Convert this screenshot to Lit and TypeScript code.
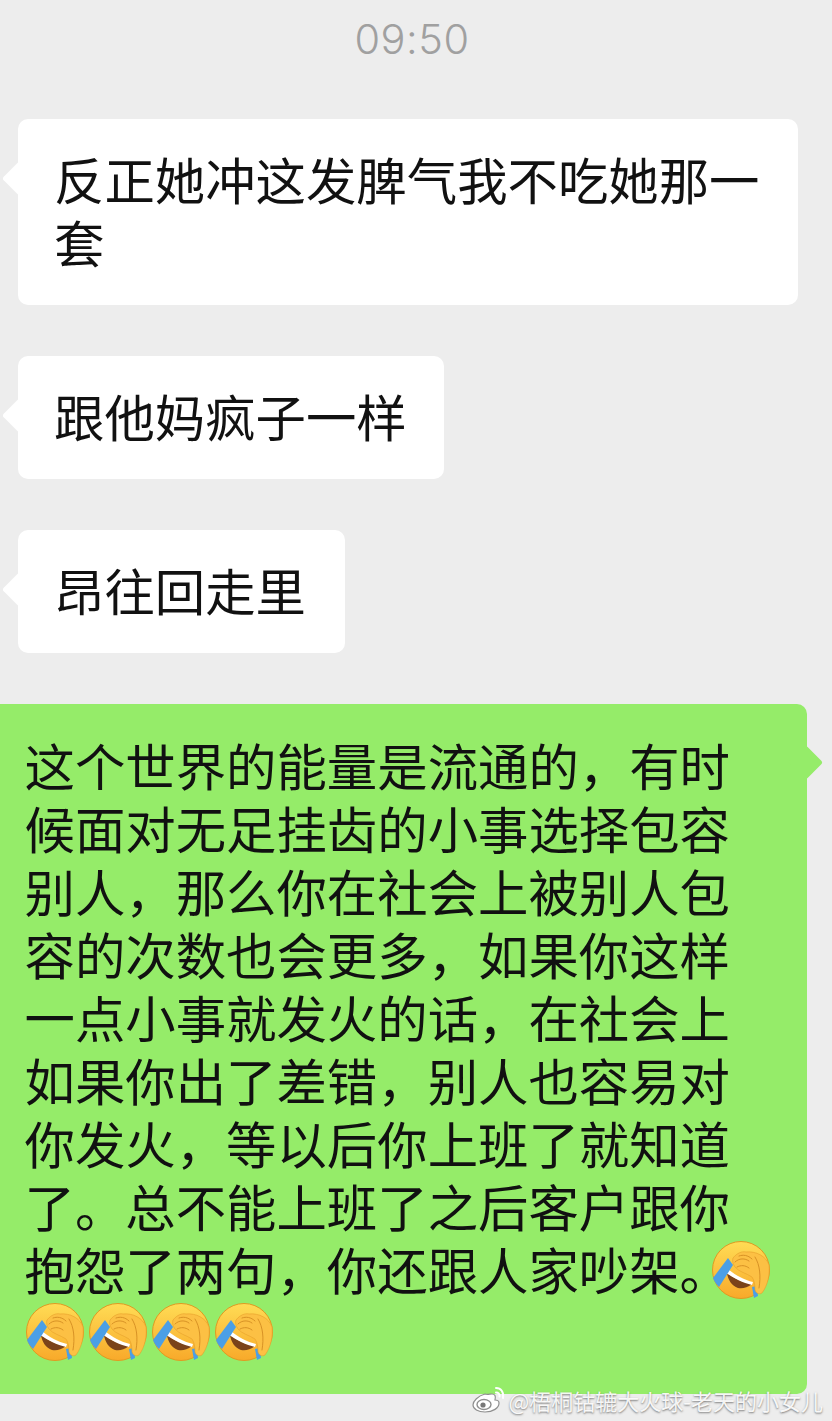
import { LitElement, html, css } from "lit";
import { customElement } from "lit/decorators.js";

const emoji = html`<svg class="emoji" viewBox="0 0 60 60" aria-hidden="true">
  <defs>
    <linearGradient id="fc" x1="0" y1="0" x2="0" y2="1">
      <stop offset="0" stop-color="#ffdc55"/><stop offset="1" stop-color="#f8a92a"/>
    </linearGradient>
  </defs>
  <circle cx="30" cy="30" r="28.5" fill="url(#fc)" stroke="#e09a22" stroke-width="1"/>
  <path d="M16 33C22 38 32 42 41 44 36 48 31 49 27 48 21 46 17 40 16 33z" fill="#7a431a"/>
  <path d="M17 29C24 35 33 40 42 42L41 45C32 43 23 38 15 33z" fill="#fff"/>
  <path d="M2 38L17 18 22 25 8 47C5 44 3 41 2 38z" fill="#4b9fe6"/>
  <path d="M41 47L46 46 47 56 43 58z" fill="#4b9fe6"/>
  <path d="M22 18C26 13 31 11 35 12 45 11 55 16 58 25 59 34 57 45 51 53 48 55 45 53 44 50 44 44 43 40 41 37 35 33 28 32 24 27 22 24 21 21 22 18z" fill="#fcc044" stroke="#e6a02a" stroke-width=".6"/>
  <path d="M24 22C28 18 34 18 38 21M28 16C32 14.500 37 15 41 19M26 27C30 25 34 25 38 28M44 17C49 25 50 36 48 48" fill="none" stroke="#d89225" stroke-width="1" stroke-linecap="round"/>
</svg>`;

const GREEN = `这个世界的能量是流通的，有时
候面对无足挂齿的小事选择包容
别人，那么你在社会上被别人包
容的次数也会更多，如果你这样
一点小事就发火的话，在社会上
如果你出了差错，别人也容易对
你发火，等以后你上班了就知道
了。总不能上班了之后客户跟你`.split("\n");

@customElement("app-root")
export class AppRoot extends LitElement {
  static styles = css`
    :host {
      display: block;
      width: 832px;
      height: 1421px;
      overflow: hidden;
      position: relative;
      background: #ededed;
      font-family: "Noto Sans CJK SC", "Liberation Sans", sans-serif;
      color: #111;
    }
    .time {
      height: 78px;
      box-sizing: border-box;
      padding-right: 8px;
      display: flex;
      align-items: center;
      justify-content: center;
      font-family: "Inter", "Liberation Sans", sans-serif;
      font-size: 41.5px;
      font-weight: 300;
      letter-spacing: 0.5px;
      color: #a0a0a0;
    }
    .list {
      display: flex;
      flex-direction: column;
      gap: 51px;
      padding-top: 41px;
    }
    .bubble {
      position: relative;
      border-radius: 10px;
      font-size: 50.4px;
      line-height: 63px;
      white-space: nowrap;
    }
    .text { display: block; margin-top: -2px; margin-bottom: 2px; }
    .left {
      align-self: flex-start;
      margin-left: 18px;
      background: #fff;
      padding: 30px 37px 30px 36px;
    }
    .wide { padding-right: 38.500px; }
    .short { padding-right: 39px; }
    .left::before {
      content: "";
      position: absolute;
      left: -11px;
      top: 47px;
      width: 25px;
      height: 25px;
      background: #fff;
      border-radius: 3px;
      transform: rotate(45deg);
    }
    .right {
      width: 807px;
      box-sizing: border-box;
      background: #95ec69;
      border-radius: 0 10px 10px 0;
      padding: 31px 0 0 24.500px;
      height: 690px;
    }
    .right::before {
      content: "";
      position: absolute;
      right: -11px;
      top: 46px;
      width: 25px;
      height: 25px;
      background: #95ec69;
      border-radius: 3px;
      transform: rotate(45deg);
    }
    .line { display: block; height: 63px; position: relative; }
    .emoji {
      width: 60px;
      height: 60px;
      vertical-align: -10px;
      margin-left: -19px;
    }
    .emojis { display: flex; gap: 3px; height: 63px; align-items: center; margin-top: -2px; }
    .emojis .emoji { margin: 0; flex: none; }
    .mark {
      position: absolute;
      right: 9px;
      bottom: 6px;
      display: flex;
      align-items: center;
      gap: 2px;
      font-size: 22px;
      line-height: 30px;
      color: rgba(255, 255, 255, 0.92);
      text-shadow: 0 1px 2px rgba(80, 80, 80, 0.75);
      white-space: nowrap;
    }
    .mark svg { width: 36px; height: 28px; }
  `;

  render() {
    return html`
      <div class="time">09:50</div>
      <div class="list">
        <div class="bubble left wide"><span class="text">反正她冲这发脾气我不吃她那一<br />套</span></div>
        <div class="bubble left"><span class="text">跟他妈疯子一样</span></div>
        <div class="bubble left short"><span class="text">昂往回走里</span></div>
        <div class="bubble right">
          <span class="text">
            ${GREEN.map((l) => html`<span class="line">${l}</span>`)}
            <span class="line">抱怨了两句，你还跟人家吵架。${emoji}</span>
          </span>
          <div class="emojis">${emoji}${emoji}${emoji}${emoji}</div>
        </div>
      </div>
      <div class="mark">
        <svg viewBox="0 0 36 28" fill="none">
          <path d="M14 8C7 10 2 15 2 19c0 4 5 7 12 7 8 0 14-4 14-9 0-2-2-3-4-3 1-4 0-6-3-6-2 0-5 1-7 0z" fill="#fff" stroke="#8f8f8f" stroke-width="1.2"/>
          <ellipse cx="13" cy="18.5" rx="7" ry="5" fill="#fff" stroke="#8f8f8f" stroke-width="1.4"/>
          <circle cx="12" cy="19" r="2.6" fill="#777"/>
          <path d="M25 2c5 0 8 4 7 10M25 6.500c2.500 0 4 1.500 3.500 4" stroke="#fff" stroke-width="2" stroke-linecap="round"/>
        </svg>
        <span>@梧桐钴辘大火球-老天的小女儿</span>
      </div>
    `;
  }
}
